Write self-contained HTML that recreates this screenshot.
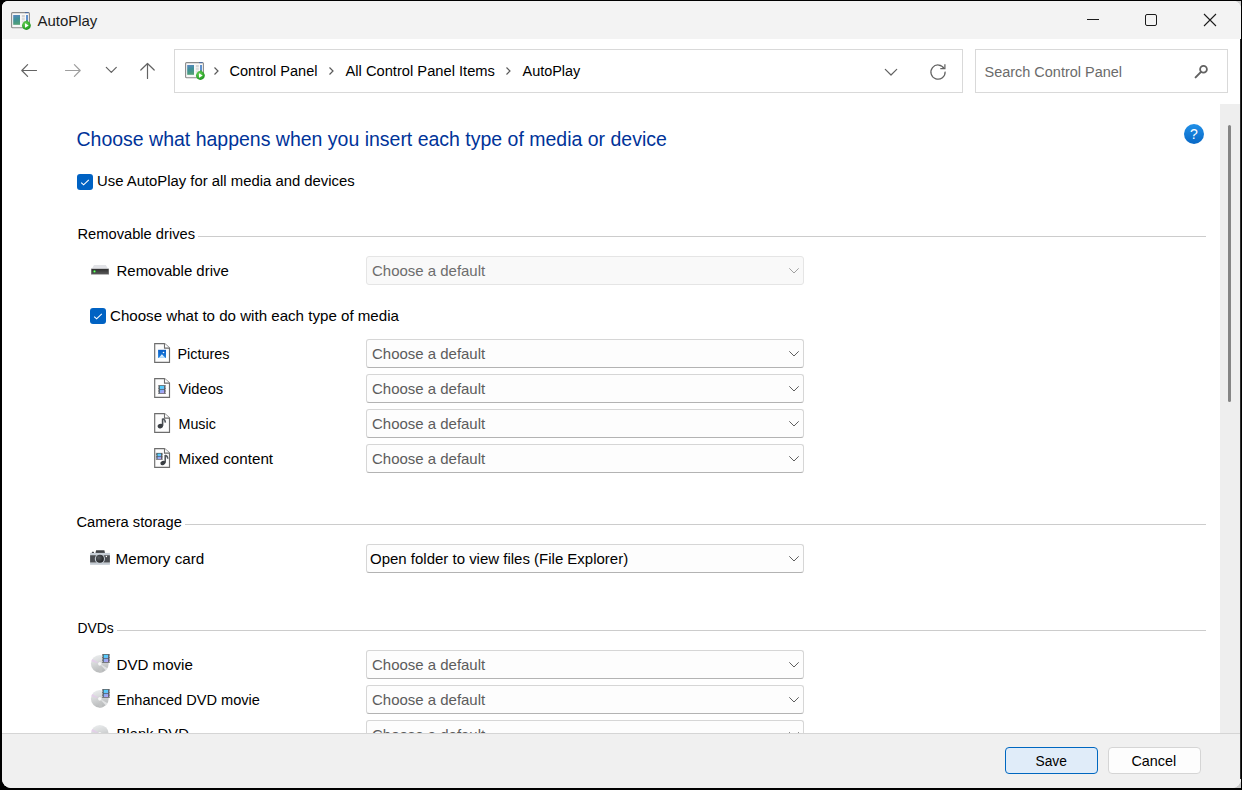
<!DOCTYPE html>
<html><head><meta charset="utf-8">
<style>
html,body{margin:0;padding:0;width:1242px;height:790px;overflow:hidden;background:#000;}
*{box-sizing:border-box;}
#win{position:absolute;left:2px;top:1px;width:1239px;height:787px;background:#fff;border-radius:6px 8px 9px 9px;overflow:hidden;}
#c{position:absolute;left:-2px;top:-1px;width:1242px;height:790px;}
.a{position:absolute;}
.t{position:absolute;font-family:"Liberation Sans",sans-serif;font-size:14.7px;line-height:14.7px;white-space:pre;color:#000;}
.box{position:absolute;border:1px solid #d9d9d9;background:#fff;}
.combo{position:absolute;left:366px;width:438px;height:29px;border:1px solid #d6d6d6;border-bottom-color:#b3b3b3;border-radius:3px;background:#fdfdfd;}
.combo.dis{border-color:#e5e5e5;background:#f9f9f9;}
.combo svg{position:absolute;left:420.5px;top:10px;}
.sep{position:absolute;height:1px;background:#cccccc;}
.btn{position:absolute;top:747px;height:27px;width:93px;border-radius:4px;}
</style></head><body>
<div class="a" style="left:1230px;top:1px;width:11px;height:10px;background:#cdcdcd"></div>
<div class="a" style="left:1230px;top:778px;width:11px;height:10px;background:#c9c9c9"></div>
<div id="win"><div id="c">
<div class="a" style="left:0;top:0;width:1242px;height:39px;background:#f3f3f3"></div>
<svg class="a" style="left:11px;top:12px" width="21" height="20" viewBox="0 0 21 20">
<defs><linearGradient id="ag11" x1="0" y1="0" x2="0.2" y2="1"><stop offset="0" stop-color="#5a88c4"/><stop offset="0.5" stop-color="#3f8f98"/><stop offset="1" stop-color="#4f9f78"/></linearGradient>
<radialGradient id="gc11" cx="0.4" cy="0.35" r="0.7"><stop offset="0" stop-color="#6fd25a"/><stop offset="0.7" stop-color="#2ea82a"/><stop offset="1" stop-color="#1f8a1f"/></radialGradient></defs>
<rect x="0.6" y="0.6" width="17.8" height="15.2" rx="1" fill="#f8f8f8" stroke="#8a8a8a" stroke-width="1.1"/>
<rect x="14" y="0.1" width="3.5" height="1" fill="#4a6aa0"/>
<rect x="2.2" y="3" width="6.8" height="9.8" fill="url(#ag11)"/>
<rect x="10.8" y="3" width="3" height="2.3" fill="#d4d4d4"/><rect x="10.8" y="5.8" width="3" height="2.3" fill="#dcdcdc"/><rect x="10.8" y="8.6" width="3" height="2" fill="#e0e0e0"/>
<rect x="15.2" y="3" width="1.6" height="6" fill="#3a78c4"/><rect x="15.2" y="8" width="1.6" height="2" fill="#4aa060"/>
<circle cx="15.4" cy="13.5" r="4.4" fill="url(#gc11)"/>
<path d="M14 11.3 L17.7 13.5 L14 15.7 Z" fill="#fff"/>
</svg>
<div class="t" style="left:37.50px;top:13.50px;font-size:14.958px;line-height:14.958px;color:#1b1b1b;">AutoPlay</div>
<div class="a" style="left:1087px;top:19px;width:12px;height:1px;background:#1b1b1b"></div>
<div class="a" style="left:1145px;top:14px;width:12px;height:12px;border:1.2px solid #1b1b1b;border-radius:2px"></div>
<svg class="a" style="left:1203px;top:13px" width="14" height="14" viewBox="0 0 14 14"><path d="M1 1 L13 13 M13 1 L1 13" stroke="#1b1b1b" stroke-width="1.1"/></svg>
<svg class="a" style="left:20px;top:63px" width="18" height="16" viewBox="0 0 18 16"><path d="M1.8 7.5 H16.5 M7.6 1.7 L1.8 7.5 L7.6 13.3" fill="none" stroke="#636363" stroke-width="1.2" stroke-linecap="round" stroke-linejoin="round"/></svg>
<svg class="a" style="left:64px;top:63px" width="18" height="16" viewBox="0 0 18 16"><path d="M16.2 7.5 H1.5 M10.4 1.7 L16.2 7.5 L10.4 13.3" fill="none" stroke="#9e9e9e" stroke-width="1.2" stroke-linecap="round" stroke-linejoin="round"/></svg>
<svg class="a" style="left:105px;top:66px" width="13" height="8" viewBox="0 0 13 8"><path d="M1.3 1.3 L6.3 6.3 L11.3 1.3" fill="none" stroke="#636363" stroke-width="1.2" stroke-linecap="round" stroke-linejoin="round"/></svg>
<svg class="a" style="left:139px;top:62px" width="18" height="18" viewBox="0 0 18 18"><path d="M8.5 1.5 V16.5 M1.8 8 L8.5 1.5 L15.2 8" fill="none" stroke="#636363" stroke-width="1.2" stroke-linecap="round" stroke-linejoin="round"/></svg>
<div class="box" style="left:174px;top:49px;width:789px;height:44px"></div>
<svg class="a" style="left:185px;top:62px" width="21" height="20" viewBox="0 0 21 20">
<defs><linearGradient id="ag185" x1="0" y1="0" x2="0.2" y2="1"><stop offset="0" stop-color="#5a88c4"/><stop offset="0.5" stop-color="#3f8f98"/><stop offset="1" stop-color="#4f9f78"/></linearGradient>
<radialGradient id="gc185" cx="0.4" cy="0.35" r="0.7"><stop offset="0" stop-color="#6fd25a"/><stop offset="0.7" stop-color="#2ea82a"/><stop offset="1" stop-color="#1f8a1f"/></radialGradient></defs>
<rect x="0.6" y="0.6" width="17.8" height="15.2" rx="1" fill="#f8f8f8" stroke="#8a8a8a" stroke-width="1.1"/>
<rect x="14" y="0.1" width="3.5" height="1" fill="#4a6aa0"/>
<rect x="2.2" y="3" width="6.8" height="9.8" fill="url(#ag185)"/>
<rect x="10.8" y="3" width="3" height="2.3" fill="#d4d4d4"/><rect x="10.8" y="5.8" width="3" height="2.3" fill="#dcdcdc"/><rect x="10.8" y="8.6" width="3" height="2" fill="#e0e0e0"/>
<rect x="15.2" y="3" width="1.6" height="6" fill="#3a78c4"/><rect x="15.2" y="8" width="1.6" height="2" fill="#4aa060"/>
<circle cx="15.4" cy="13.5" r="4.4" fill="url(#gc185)"/>
<path d="M14 11.3 L17.7 13.5 L14 15.7 Z" fill="#fff"/>
</svg>
<svg class="a" style="left:213px;top:66px" width="7" height="10" viewBox="0 0 7 10"><path d="M1.5 1.5 L5 5 L1.5 8.5" fill="none" stroke="#5a5a5a" stroke-width="1.2"/></svg>
<div class="t" style="left:229.50px;top:63.50px;font-size:14.531px;line-height:14.531px;">Control Panel</div>
<svg class="a" style="left:328px;top:66px" width="7" height="10" viewBox="0 0 7 10"><path d="M1.5 1.5 L5 5 L1.5 8.5" fill="none" stroke="#5a5a5a" stroke-width="1.2"/></svg>
<div class="t" style="left:345.50px;top:63.50px;font-size:14.700px;line-height:14.700px;">All Control Panel Items</div>
<svg class="a" style="left:505px;top:66px" width="7" height="10" viewBox="0 0 7 10"><path d="M1.5 1.5 L5 5 L1.5 8.5" fill="none" stroke="#5a5a5a" stroke-width="1.2"/></svg>
<div class="t" style="left:522.50px;top:63.50px;font-size:14.451px;line-height:14.451px;">AutoPlay</div>
<svg class="a" style="left:884px;top:68px" width="14" height="9" viewBox="0 0 14 9"><path d="M1.3 1.3 L7 7 L12.7 1.3" fill="none" stroke="#636363" stroke-width="1.2" stroke-linecap="round" stroke-linejoin="round"/></svg>
<svg class="a" style="left:928px;top:62px" width="20" height="20" viewBox="0 0 20 20"><path d="M16.2 6.6 A7.1 7.1 0 1 0 17.1 9.6" fill="none" stroke="#636363" stroke-width="1.25"/><path d="M16.9 2.2 V6.7 H12.3" fill="none" stroke="#636363" stroke-width="1.25"/></svg>
<div class="box" style="left:975px;top:49px;width:253px;height:44px"></div>
<div class="t" style="left:984.50px;top:64.50px;font-size:14.484px;line-height:14.484px;color:#6b6b6b;">Search Control Panel</div>
<svg class="a" style="left:1193px;top:64px" width="16" height="16" viewBox="0 0 16 16"><circle cx="10.5" cy="5.3" r="3.4" fill="none" stroke="#626262" stroke-width="1.8"/><path d="M8 7.9 L2.6 13.4" stroke="#626262" stroke-width="2" stroke-linecap="round"/></svg>
<div class="a" style="left:1220px;top:104px;width:20px;height:629px;background:#eeeeee"></div>
<div class="a" style="left:1228px;top:125px;width:3px;height:277px;background:#858585;border-radius:1.5px"></div>
<svg class="a" style="left:1184px;top:124px" width="20" height="20" viewBox="0 0 20 20"><defs><linearGradient id="hg" x1="0" y1="0" x2="0" y2="1"><stop offset="0" stop-color="#2190e8"/><stop offset="1" stop-color="#0868c6"/></linearGradient></defs><circle cx="10" cy="10" r="10" fill="url(#hg)"/><text x="10" y="15" text-anchor="middle" font-family="Liberation Sans" font-size="14" fill="#fff">?</text></svg>
<div class="t" style="left:76.50px;top:130.00px;font-size:19.499px;line-height:19.499px;color:#003399;">Choose what happens when you insert each type of media or device</div>
<div class="a" style="left:77px;top:174px;width:16px;height:16px;background:#0062c3;border-radius:3px"></div><svg class="a" style="left:77px;top:174px" width="16" height="16" viewBox="0 0 16 16"><path d="M4.2 8.6 L6.6 10.8 L11.8 5.8" fill="none" stroke="#fff" stroke-width="1.1"/></svg>
<div class="t" style="left:97.00px;top:173.50px;font-size:14.874px;line-height:14.874px;">Use AutoPlay for all media and devices</div>
<div class="t" style="left:77.50px;top:227.00px;font-size:14.700px;line-height:14.700px;">Removable drives</div>
<div class="sep" style="left:198px;top:236px;width:1008px"></div>
<svg class="a" style="left:91px;top:264px" width="19" height="12" viewBox="0 0 19 12"><defs><linearGradient id="drg" x1="0" y1="0" x2="0" y2="1"><stop offset="0" stop-color="#2e2e2e"/><stop offset="1" stop-color="#5a5a5a"/></linearGradient><radialGradient id="led"><stop offset="0" stop-color="#7dff7d"/><stop offset="0.5" stop-color="#3fdf3f"/><stop offset="1" stop-color="#3fdf3f" stop-opacity="0"/></radialGradient></defs><path d="M3 1 H14.8 L17.2 4.8 H0.8 Z" fill="#e2e3e7"/><rect x="0.2" y="4.8" width="17.7" height="5.4" fill="url(#drg)"/><rect x="0.2" y="4.8" width="0.7" height="5.4" fill="#777"/><rect x="17.2" y="4.8" width="0.7" height="5.4" fill="#777"/><rect x="0.2" y="10.2" width="17.7" height="0.6" fill="#9c9c9c"/><circle cx="3.5" cy="7.4" r="1.6" fill="url(#led)"/></svg>
<div class="t" style="left:116.50px;top:263.50px;font-size:14.972px;line-height:14.972px;">Removable drive</div>
<div class="combo dis" style="top:256px"><svg width="12" height="8" viewBox="0 0 12 8"><path d="M1.3 1.3 L6 6 L10.7 1.3" fill="none" stroke="#a0a0a0" stroke-width="1"/></svg></div>
<div class="t" style="left:372.00px;top:263.50px;font-size:14.970px;line-height:14.970px;color:#6d6d6d;">Choose a default</div>
<div class="a" style="left:90px;top:308px;width:16px;height:16px;background:#0062c3;border-radius:3px"></div><svg class="a" style="left:90px;top:308px" width="16" height="16" viewBox="0 0 16 16"><path d="M4.2 8.6 L6.6 10.8 L11.8 5.8" fill="none" stroke="#fff" stroke-width="1.1"/></svg>
<div class="t" style="left:110.00px;top:308.00px;font-size:15.122px;line-height:15.122px;">Choose what to do with each type of media</div>
<svg class="a" style="left:154px;top:343px" width="17" height="21" viewBox="0 0 17 21"><defs><linearGradient id="fb" x1="0" y1="0" x2="1" y2="1"><stop offset="0" stop-color="#3fd8ff"/><stop offset="1" stop-color="#7ab8f5"/></linearGradient><linearGradient id="fp" x1="0" y1="0" x2="1" y2="1"><stop offset="0" stop-color="#6fb4f8"/><stop offset="1" stop-color="#c49cf0"/></linearGradient><linearGradient id="ng" x1="0" y1="0" x2="0" y2="1"><stop offset="0" stop-color="#6a7077"/><stop offset="1" stop-color="#2f3338"/></linearGradient></defs>
<path d="M0.7 0.6 H10.5 L15.5 5.1 V19.4 H0.7 Z" fill="#fdfdfd" stroke="#6d6d6d" stroke-width="1.15" stroke-linejoin="miter"/>
<path d="M10.5 0.6 V5.1 H15.5" fill="#fff" stroke="#6d6d6d" stroke-width="1.1"/>
<defs><linearGradient id="pg" x1="0" y1="0" x2="0" y2="1"><stop offset="0" stop-color="#0a5fc8"/><stop offset="1" stop-color="#1a7ddc"/></linearGradient><linearGradient id="mg" x1="0" y1="0" x2="0" y2="1"><stop offset="0" stop-color="#ffffff"/><stop offset="1" stop-color="#a9d6fa"/></linearGradient></defs><rect x="4.1" y="6.8" width="7.9" height="8.1" fill="url(#pg)"/><path d="M4.6 14.9 L7.9 11.3 L11.5 14.9 Z" fill="url(#mg)"/><circle cx="9.5" cy="9.5" r="0.8" fill="#fff"/></svg>
<div class="t" style="left:177.50px;top:346.50px;font-size:14.412px;line-height:14.412px;">Pictures</div>
<div class="combo" style="top:339px"><svg width="12" height="8" viewBox="0 0 12 8"><path d="M1.3 1.3 L6 6 L10.7 1.3" fill="none" stroke="#5f5f5f" stroke-width="1"/></svg></div>
<div class="t" style="left:372.00px;top:346.50px;font-size:14.970px;line-height:14.970px;color:#5c5c5c;">Choose a default</div>
<svg class="a" style="left:154px;top:378px" width="17" height="21" viewBox="0 0 17 21"><defs><linearGradient id="fb" x1="0" y1="0" x2="1" y2="1"><stop offset="0" stop-color="#3fd8ff"/><stop offset="1" stop-color="#7ab8f5"/></linearGradient><linearGradient id="fp" x1="0" y1="0" x2="1" y2="1"><stop offset="0" stop-color="#6fb4f8"/><stop offset="1" stop-color="#c49cf0"/></linearGradient><linearGradient id="ng" x1="0" y1="0" x2="0" y2="1"><stop offset="0" stop-color="#6a7077"/><stop offset="1" stop-color="#2f3338"/></linearGradient></defs>
<path d="M0.7 0.6 H10.5 L15.5 5.1 V19.4 H0.7 Z" fill="#fdfdfd" stroke="#6d6d6d" stroke-width="1.15" stroke-linejoin="miter"/>
<path d="M10.5 0.6 V5.1 H15.5" fill="#fff" stroke="#6d6d6d" stroke-width="1.1"/>
<rect x="4.2" y="7.2" width="7.6" height="8.6" fill="#505357"/><rect x="4.19" y="7.8" width="0.8" height="0.8" fill="#ffffff" opacity="0.8"/><rect x="11.010000000000002" y="7.8" width="0.8" height="0.8" fill="#ffffff" opacity="0.8"/><rect x="4.19" y="9.4" width="0.8" height="0.8" fill="#ffffff" opacity="0.8"/><rect x="11.010000000000002" y="9.4" width="0.8" height="0.8" fill="#ffffff" opacity="0.8"/><rect x="4.19" y="11.0" width="0.8" height="0.8" fill="#ffffff" opacity="0.8"/><rect x="11.010000000000002" y="11.0" width="0.8" height="0.8" fill="#ffffff" opacity="0.8"/><rect x="4.19" y="12.600000000000001" width="0.8" height="0.8" fill="#ffffff" opacity="0.8"/><rect x="11.010000000000002" y="12.600000000000001" width="0.8" height="0.8" fill="#ffffff" opacity="0.8"/><rect x="4.19" y="14.2" width="0.8" height="0.8" fill="#ffffff" opacity="0.8"/><rect x="11.010000000000002" y="14.2" width="0.8" height="0.8" fill="#ffffff" opacity="0.8"/><rect x="5.800000000000001" y="7.9" width="4.3999999999999995" height="3.3" fill="url(#fb)"/><rect x="5.800000000000001" y="11.85" width="4.3999999999999995" height="3.3" fill="url(#fp)"/></svg>
<div class="t" style="left:178.50px;top:381.50px;font-size:14.700px;line-height:14.700px;">Videos</div>
<div class="combo" style="top:374px"><svg width="12" height="8" viewBox="0 0 12 8"><path d="M1.3 1.3 L6 6 L10.7 1.3" fill="none" stroke="#5f5f5f" stroke-width="1"/></svg></div>
<div class="t" style="left:372.00px;top:381.50px;font-size:14.970px;line-height:14.970px;color:#5c5c5c;">Choose a default</div>
<svg class="a" style="left:154px;top:413px" width="17" height="21" viewBox="0 0 17 21"><defs><linearGradient id="fb" x1="0" y1="0" x2="1" y2="1"><stop offset="0" stop-color="#3fd8ff"/><stop offset="1" stop-color="#7ab8f5"/></linearGradient><linearGradient id="fp" x1="0" y1="0" x2="1" y2="1"><stop offset="0" stop-color="#6fb4f8"/><stop offset="1" stop-color="#c49cf0"/></linearGradient><linearGradient id="ng" x1="0" y1="0" x2="0" y2="1"><stop offset="0" stop-color="#6a7077"/><stop offset="1" stop-color="#2f3338"/></linearGradient></defs>
<path d="M0.7 0.6 H10.5 L15.5 5.1 V19.4 H0.7 Z" fill="#fdfdfd" stroke="#6d6d6d" stroke-width="1.15" stroke-linejoin="miter"/>
<path d="M10.5 0.6 V5.1 H15.5" fill="#fff" stroke="#6d6d6d" stroke-width="1.1"/>
<path d="M8.6 5.6 V12.8" stroke="#4a4e53" stroke-width="1.6"/><path d="M8.6 5.8 Q11.2 6.3 11.4 9.6" fill="none" stroke="#555a60" stroke-width="1.5"/><ellipse cx="6.3" cy="13.1" rx="2.7" ry="2.2" fill="#3a3e43" transform="rotate(-20 6.3 13.1)"/></svg>
<div class="t" style="left:178.50px;top:416.50px;font-size:14.303px;line-height:14.303px;">Music</div>
<div class="combo" style="top:409px"><svg width="12" height="8" viewBox="0 0 12 8"><path d="M1.3 1.3 L6 6 L10.7 1.3" fill="none" stroke="#5f5f5f" stroke-width="1"/></svg></div>
<div class="t" style="left:372.00px;top:416.50px;font-size:14.970px;line-height:14.970px;color:#5c5c5c;">Choose a default</div>
<svg class="a" style="left:154px;top:448px" width="17" height="21" viewBox="0 0 17 21"><defs><linearGradient id="fb" x1="0" y1="0" x2="1" y2="1"><stop offset="0" stop-color="#3fd8ff"/><stop offset="1" stop-color="#7ab8f5"/></linearGradient><linearGradient id="fp" x1="0" y1="0" x2="1" y2="1"><stop offset="0" stop-color="#6fb4f8"/><stop offset="1" stop-color="#c49cf0"/></linearGradient><linearGradient id="ng" x1="0" y1="0" x2="0" y2="1"><stop offset="0" stop-color="#6a7077"/><stop offset="1" stop-color="#2f3338"/></linearGradient></defs>
<path d="M0.7 0.6 H10.5 L15.5 5.1 V19.4 H0.7 Z" fill="#fdfdfd" stroke="#6d6d6d" stroke-width="1.15" stroke-linejoin="miter"/>
<path d="M10.5 0.6 V5.1 H15.5" fill="#fff" stroke="#6d6d6d" stroke-width="1.1"/>
<rect x="1.9" y="4.9" width="6.8" height="6.8" fill="#505357"/><rect x="1.89" y="5.5" width="0.8" height="0.8" fill="#ffffff" opacity="0.8"/><rect x="7.909999999999999" y="5.5" width="0.8" height="0.8" fill="#ffffff" opacity="0.8"/><rect x="1.89" y="7.1" width="0.8" height="0.8" fill="#ffffff" opacity="0.8"/><rect x="7.909999999999999" y="7.1" width="0.8" height="0.8" fill="#ffffff" opacity="0.8"/><rect x="1.89" y="8.7" width="0.8" height="0.8" fill="#ffffff" opacity="0.8"/><rect x="7.909999999999999" y="8.7" width="0.8" height="0.8" fill="#ffffff" opacity="0.8"/><rect x="1.89" y="10.3" width="0.8" height="0.8" fill="#ffffff" opacity="0.8"/><rect x="7.909999999999999" y="10.3" width="0.8" height="0.8" fill="#ffffff" opacity="0.8"/><rect x="3.5" y="5.6000000000000005" width="3.5999999999999996" height="2.4" fill="url(#fb)"/><rect x="3.5" y="8.65" width="3.5999999999999996" height="2.4" fill="url(#fp)"/><path d="M11.2 7 V14.8" stroke="#4a4e53" stroke-width="1.5"/><path d="M11.2 7.2 Q13.6 7.7 13.8 10.8" fill="none" stroke="#555a60" stroke-width="1.4"/><ellipse cx="8.9" cy="15" rx="2.6" ry="2.1" fill="#3a3e43" transform="rotate(-20 8.9 15)"/></svg>
<div class="t" style="left:178.50px;top:450.50px;font-size:15.190px;line-height:15.190px;">Mixed content</div>
<div class="combo" style="top:444px"><svg width="12" height="8" viewBox="0 0 12 8"><path d="M1.3 1.3 L6 6 L10.7 1.3" fill="none" stroke="#5f5f5f" stroke-width="1"/></svg></div>
<div class="t" style="left:372.00px;top:451.50px;font-size:14.970px;line-height:14.970px;color:#5c5c5c;">Choose a default</div>
<div class="t" style="left:76.50px;top:514.50px;font-size:14.700px;line-height:14.700px;">Camera storage</div>
<div class="sep" style="left:185px;top:524px;width:1021px"></div>
<svg class="a" style="left:90px;top:550px" width="20" height="15" viewBox="0 0 20 15"><defs><radialGradient id="lg" cx="0.35" cy="0.35" r="0.7"><stop offset="0" stop-color="#5a5e63"/><stop offset="1" stop-color="#1f2124"/></radialGradient></defs><path d="M6.1 0.2 H14.4 L15 2.9 H5.5 Z" fill="#404347"/><rect x="1.8" y="1.8" width="2.2" height="1.2" rx="0.5" fill="#3a3d40"/><rect x="0.1" y="2.9" width="19.8" height="2.3" fill="#c8cfd7"/><rect x="0.1" y="5.2" width="19.8" height="7.5" fill="#4a4d52"/><rect x="0.1" y="12.7" width="19.8" height="2.1" fill="#c3cad2"/><circle cx="9.9" cy="8.8" r="5.1" fill="#c8cfd7"/><circle cx="9.9" cy="8.8" r="4" fill="url(#lg)"/><circle cx="16.4" cy="6.6" r="0.75" fill="#fff"/></svg>
<div class="t" style="left:115.50px;top:550.50px;font-size:15.225px;line-height:15.225px;">Memory card</div>
<div class="combo" style="top:544px"><svg width="12" height="8" viewBox="0 0 12 8"><path d="M1.3 1.3 L6 6 L10.7 1.3" fill="none" stroke="#5f5f5f" stroke-width="1"/></svg></div>
<div class="t" style="left:370.00px;top:550.50px;font-size:14.992px;line-height:14.992px;">Open folder to view files (File Explorer)</div>
<div class="t" style="left:77.50px;top:621.50px;font-size:13.905px;line-height:13.905px;">DVDs</div>
<div class="sep" style="left:117px;top:630px;width:1089px"></div>
<svg class="a" style="left:90px;top:654px" width="20" height="20" viewBox="0 0 20 20"><defs><linearGradient id="fb" x1="0" y1="0" x2="1" y2="1"><stop offset="0" stop-color="#3fd8ff"/><stop offset="1" stop-color="#7ab8f5"/></linearGradient><linearGradient id="fp" x1="0" y1="0" x2="1" y2="1"><stop offset="0" stop-color="#6fb4f8"/><stop offset="1" stop-color="#c49cf0"/></linearGradient><linearGradient id="ng" x1="0" y1="0" x2="0" y2="1"><stop offset="0" stop-color="#6a7077"/><stop offset="1" stop-color="#2f3338"/></linearGradient></defs>
<defs><linearGradient id="dg654" x1="0" y1="0" x2="0.3" y2="1"><stop offset="0" stop-color="#eef0f1"/><stop offset="0.5" stop-color="#d6d8d9"/><stop offset="1" stop-color="#b9bbbc"/></linearGradient></defs>
<circle cx="9.8" cy="9.8" r="8.9" fill="url(#dg654)"/>
<path d="M9.8 9.8 L1.2 7.2 A8.9 8.9 0 0 1 2.4 5 Z" fill="#e6c8ec" opacity="0.7"/>
<path d="M9.8 9.8 L12.8 18.2 A8.9 8.9 0 0 1 9 18.7 Z" fill="#c4c6c7" opacity="0.6"/>
<path d="M9.8 9.8 L17.6 14.2 A8.9 8.9 0 0 1 15.8 16.4 Z" fill="#e8eaeb" opacity="0.8"/>
<circle cx="9.8" cy="9.8" r="2.1" fill="#f6f7f7" stroke="#c8cacb" stroke-width="0.5"/>
<rect x="12.1" y="0.1" width="7.7" height="8.6" fill="#505357"/><rect x="12.09" y="0.7" width="0.8" height="0.8" fill="#ffffff" opacity="0.8"/><rect x="19.01" y="0.7" width="0.8" height="0.8" fill="#ffffff" opacity="0.8"/><rect x="12.09" y="2.3" width="0.8" height="0.8" fill="#ffffff" opacity="0.8"/><rect x="19.01" y="2.3" width="0.8" height="0.8" fill="#ffffff" opacity="0.8"/><rect x="12.09" y="3.9000000000000004" width="0.8" height="0.8" fill="#ffffff" opacity="0.8"/><rect x="19.01" y="3.9000000000000004" width="0.8" height="0.8" fill="#ffffff" opacity="0.8"/><rect x="12.09" y="5.500000000000001" width="0.8" height="0.8" fill="#ffffff" opacity="0.8"/><rect x="19.01" y="5.500000000000001" width="0.8" height="0.8" fill="#ffffff" opacity="0.8"/><rect x="12.09" y="7.1000000000000005" width="0.8" height="0.8" fill="#ffffff" opacity="0.8"/><rect x="19.01" y="7.1000000000000005" width="0.8" height="0.8" fill="#ffffff" opacity="0.8"/><rect x="13.7" y="0.7999999999999999" width="4.5" height="3.3" fill="url(#fb)"/><rect x="13.7" y="4.749999999999999" width="4.5" height="3.3" fill="url(#fp)"/></svg>
<div class="t" style="left:116.50px;top:656.50px;font-size:15.108px;line-height:15.108px;">DVD movie</div>
<div class="combo" style="top:650px"><svg width="12" height="8" viewBox="0 0 12 8"><path d="M1.3 1.3 L6 6 L10.7 1.3" fill="none" stroke="#5f5f5f" stroke-width="1"/></svg></div>
<div class="t" style="left:372.00px;top:657.50px;font-size:14.970px;line-height:14.970px;color:#5c5c5c;">Choose a default</div>
<svg class="a" style="left:90px;top:689px" width="20" height="20" viewBox="0 0 20 20"><defs><linearGradient id="fb" x1="0" y1="0" x2="1" y2="1"><stop offset="0" stop-color="#3fd8ff"/><stop offset="1" stop-color="#7ab8f5"/></linearGradient><linearGradient id="fp" x1="0" y1="0" x2="1" y2="1"><stop offset="0" stop-color="#6fb4f8"/><stop offset="1" stop-color="#c49cf0"/></linearGradient><linearGradient id="ng" x1="0" y1="0" x2="0" y2="1"><stop offset="0" stop-color="#6a7077"/><stop offset="1" stop-color="#2f3338"/></linearGradient></defs>
<defs><linearGradient id="dg689" x1="0" y1="0" x2="0.3" y2="1"><stop offset="0" stop-color="#eef0f1"/><stop offset="0.5" stop-color="#d6d8d9"/><stop offset="1" stop-color="#b9bbbc"/></linearGradient></defs>
<circle cx="9.8" cy="9.8" r="8.9" fill="url(#dg689)"/>
<path d="M9.8 9.8 L1.2 7.2 A8.9 8.9 0 0 1 2.4 5 Z" fill="#e6c8ec" opacity="0.7"/>
<path d="M9.8 9.8 L12.8 18.2 A8.9 8.9 0 0 1 9 18.7 Z" fill="#c4c6c7" opacity="0.6"/>
<path d="M9.8 9.8 L17.6 14.2 A8.9 8.9 0 0 1 15.8 16.4 Z" fill="#e8eaeb" opacity="0.8"/>
<circle cx="9.8" cy="9.8" r="2.1" fill="#f6f7f7" stroke="#c8cacb" stroke-width="0.5"/>
<rect x="12.1" y="0.1" width="7.7" height="8.6" fill="#505357"/><rect x="12.09" y="0.7" width="0.8" height="0.8" fill="#ffffff" opacity="0.8"/><rect x="19.01" y="0.7" width="0.8" height="0.8" fill="#ffffff" opacity="0.8"/><rect x="12.09" y="2.3" width="0.8" height="0.8" fill="#ffffff" opacity="0.8"/><rect x="19.01" y="2.3" width="0.8" height="0.8" fill="#ffffff" opacity="0.8"/><rect x="12.09" y="3.9000000000000004" width="0.8" height="0.8" fill="#ffffff" opacity="0.8"/><rect x="19.01" y="3.9000000000000004" width="0.8" height="0.8" fill="#ffffff" opacity="0.8"/><rect x="12.09" y="5.500000000000001" width="0.8" height="0.8" fill="#ffffff" opacity="0.8"/><rect x="19.01" y="5.500000000000001" width="0.8" height="0.8" fill="#ffffff" opacity="0.8"/><rect x="12.09" y="7.1000000000000005" width="0.8" height="0.8" fill="#ffffff" opacity="0.8"/><rect x="19.01" y="7.1000000000000005" width="0.8" height="0.8" fill="#ffffff" opacity="0.8"/><rect x="13.7" y="0.7999999999999999" width="4.5" height="3.3" fill="url(#fb)"/><rect x="13.7" y="4.749999999999999" width="4.5" height="3.3" fill="url(#fp)"/></svg>
<div class="t" style="left:116.50px;top:692.50px;font-size:14.597px;line-height:14.597px;">Enhanced DVD movie</div>
<div class="combo" style="top:685px"><svg width="12" height="8" viewBox="0 0 12 8"><path d="M1.3 1.3 L6 6 L10.7 1.3" fill="none" stroke="#5f5f5f" stroke-width="1"/></svg></div>
<div class="t" style="left:372.00px;top:692.50px;font-size:14.970px;line-height:14.970px;color:#5c5c5c;">Choose a default</div>
<svg class="a" style="left:90px;top:724px" width="20" height="20" viewBox="0 0 20 20"><defs><linearGradient id="fb" x1="0" y1="0" x2="1" y2="1"><stop offset="0" stop-color="#3fd8ff"/><stop offset="1" stop-color="#7ab8f5"/></linearGradient><linearGradient id="fp" x1="0" y1="0" x2="1" y2="1"><stop offset="0" stop-color="#6fb4f8"/><stop offset="1" stop-color="#c49cf0"/></linearGradient><linearGradient id="ng" x1="0" y1="0" x2="0" y2="1"><stop offset="0" stop-color="#6a7077"/><stop offset="1" stop-color="#2f3338"/></linearGradient></defs>
<defs><linearGradient id="dg724" x1="0" y1="0" x2="0.3" y2="1"><stop offset="0" stop-color="#eef0f1"/><stop offset="0.5" stop-color="#d6d8d9"/><stop offset="1" stop-color="#b9bbbc"/></linearGradient></defs>
<circle cx="9.8" cy="9.8" r="8.9" fill="url(#dg724)"/>
<path d="M9.8 9.8 L1.2 7.2 A8.9 8.9 0 0 1 2.4 5 Z" fill="#e6c8ec" opacity="0.7"/>
<path d="M9.8 9.8 L12.8 18.2 A8.9 8.9 0 0 1 9 18.7 Z" fill="#c4c6c7" opacity="0.6"/>
<path d="M9.8 9.8 L17.6 14.2 A8.9 8.9 0 0 1 15.8 16.4 Z" fill="#e8eaeb" opacity="0.8"/>
<circle cx="9.8" cy="9.8" r="2.1" fill="#f6f7f7" stroke="#c8cacb" stroke-width="0.5"/>
</svg>
<div class="t" style="left:116.50px;top:726.50px;font-size:14.800px;line-height:14.800px;">Blank DVD</div>
<div class="combo" style="top:720px"><svg width="12" height="8" viewBox="0 0 12 8"><path d="M1.3 1.3 L6 6 L10.7 1.3" fill="none" stroke="#5f5f5f" stroke-width="1"/></svg></div>
<div class="t" style="left:372.00px;top:727.50px;font-size:14.970px;line-height:14.970px;color:#5c5c5c;">Choose a default</div>
<div class="a" style="left:0;top:733px;width:1242px;height:57px;background:#f0f0f0;border-top:1px solid #d5d5d5"></div>
<div class="btn" style="left:1005px;background:#e0ecf9;border:1.5px solid #0067c0"></div>
<div class="t" style="left:1035.50px;top:755.00px;font-size:13.781px;line-height:13.781px;">Save</div>
<div class="btn" style="left:1108px;background:#fdfdfd;border:1px solid #d5d5d5"></div>
<div class="t" style="left:1131.50px;top:754.00px;font-size:14.366px;line-height:14.366px;">Cancel</div>
</div></div>
<div class="a" style="left:1240px;top:39px;width:1px;height:740px;background:#2a2a2a"></div>
<div class="a" style="left:2px;top:6px;width:1px;height:32px;background:#fafafa"></div>
</body></html>
